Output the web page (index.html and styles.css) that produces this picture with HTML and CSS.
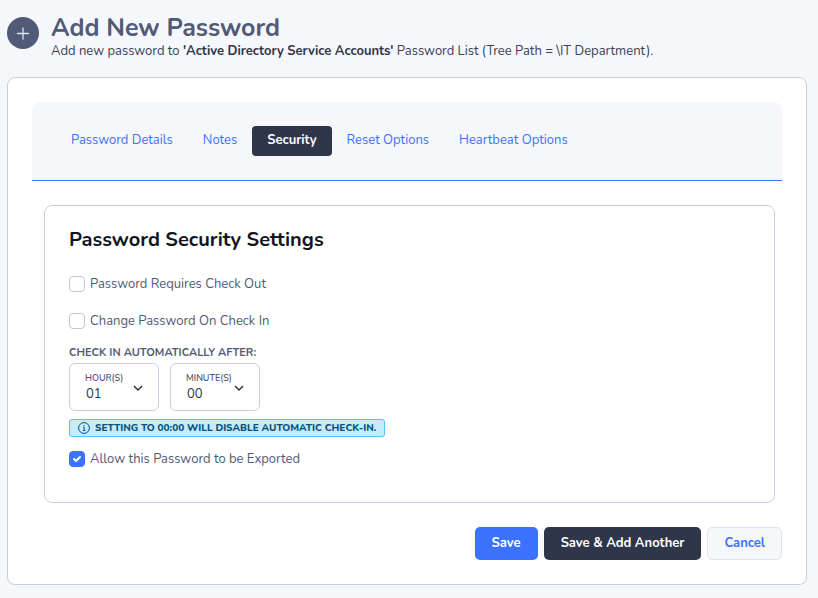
FILE: index.html
```html
<!DOCTYPE html>
<html lang="en">
<head>
  <meta charset="UTF-8">
  <meta name="viewport" content="width=device-width, initial-scale=1.0">
  <title>Add New Password</title>
  <link rel="stylesheet" href="styles.css">
</head>
<body>
  <header class="page-header">
    <svg class="page-icon" viewBox="0 0 32 32" aria-hidden="true">
      <circle cx="16" cy="16" r="16" fill="#515a76"/>
      <path d="M16 11v11M10.500 16.500h11" stroke="#dfe3ee" stroke-width="1.300" stroke-linecap="round"/>
    </svg>
    <div>
      <h1>Add New Password</h1>
      <p>Add new password to <strong>'Active Directory Service Accounts'</strong> Password List (Tree Path = \IT Department).</p>
    </div>
  </header>

  <main class="card">
    <nav class="tabs">
      <a href="#details">Password Details</a>
      <a href="#notes">Notes</a>
      <a href="#security" class="active">Security</a>
      <a href="#reset">Reset Options</a>
      <a href="#heartbeat">Heartbeat Options</a>
    </nav>

    <form id="securityForm">
      <section class="panel">
        <h2>Password Security Settings</h2>

        <div class="check">
          <input type="checkbox" id="requireCheckOut">
          <label for="requireCheckOut">Password Requires Check Out</label>
        </div>
        <div class="check">
          <input type="checkbox" id="changeOnCheckIn">
          <label for="changeOnCheckIn">Change Password On Check In</label>
        </div>

        <h3>CHECK IN AUTOMATICALLY AFTER:</h3>
        <div class="time">
          <div class="select-box">
            <label for="hours">HOUR(S)</label>
            <select id="hours">
              <option>00</option>
              <option selected>01</option>
              <option>02</option>
              <option>03</option>
            </select>
            <svg viewBox="0 0 10 6" aria-hidden="true"><path d="M1 1l4 4 4-4"/></svg>
          </div>
          <div class="select-box">
            <label for="minutes">MINUTE(S)</label>
            <select id="minutes">
              <option selected>00</option>
              <option>15</option>
              <option>30</option>
              <option>45</option>
            </select>
            <svg viewBox="0 0 10 6" aria-hidden="true"><path d="M1 1l4 4 4-4"/></svg>
          </div>
        </div>

        <div class="info">
          <svg viewBox="0 0 12 12" aria-hidden="true">
            <circle cx="6" cy="6" r="5.400"/>
            <path d="M5 5.400h1.200v3M4.900 8.500h2.400M6 3v1"/>
          </svg>
          <span>SETTING TO 00:00 WILL DISABLE AUTOMATIC CHECK-IN.</span>
        </div>

        <div class="check">
          <input type="checkbox" id="allowExport" checked>
          <label for="allowExport">Allow this Password to be Exported</label>
        </div>
      </section>

      <div class="actions">
        <button type="submit" class="save">Save</button>
        <button type="submit" class="save-another">Save &amp; Add Another</button>
        <button type="button" class="cancel">Cancel</button>
      </div>
    </form>
  </main>
</body>
</html>
```

FILE: styles.css
```css
* {
  box-sizing: border-box;
}
body {
  margin: 0;
  padding: 14px 11px 13px 7px;
  background: #f5f7fb;
  color: #3a4158;
  font-family: Nunito, 'Open Sans', sans-serif;
  font-size: 13px;
  line-height: 18px;
}
h1, h2, h3, p {
  margin: 0;
}
.page-header {
  display: flex;
  gap: 12px;
  margin-bottom: 17px;
}
.page-icon {
  width: 32px;
  height: 32px;
  margin-top: 3px;
}
h1 {
  color: #515a76;
  font-size: 25px;
  font-weight: 700;
  line-height: 28px;
}
.page-header strong {
  color: #2f3548;
}
.card {
  padding: 24px;
  background: #fff;
  border: 1px solid #c9cede;
  border-radius: 8px;
}
.tabs {
  display: flex;
  padding: 24px;
  background: #f5f7fb;
  border-bottom: 1px solid #3b73ff;
  border-radius: 8px 8px 0 0;
}
.tabs a {
  padding: 5px 15px 7px;
  border-radius: 4px;
  color: #3b73ff;
  text-decoration: none;
}
.tabs .active {
  background: #30364a;
  color: #fff;
  font-weight: 700;
}
.panel {
  margin: 24px 7px 24px 12px;
  padding: 21px 24px 15px;
  border: 1px solid #c9cede;
  border-radius: 8px;
}
h2 {
  margin-bottom: 22px;
  color: #121521;
  font-size: 20px;
  font-weight: 700;
  line-height: 26px;
}
.check {
  display: flex;
  align-items: center;
  gap: 5px;
  margin-bottom: 19px;
  color: #515a76;
}
.check input {
  appearance: none;
  width: 16px;
  height: 16px;
  margin: 0;
  background: #fff;
  border: 1px solid #c3c9dc;
  border-radius: 4px;
}
.check input:checked {
  background: #3b73ff url("data:image/svg+xml,%3Csvg xmlns='http://www.w3.org/2000/svg' viewBox='0 0 16 16'%3E%3Cpath d='M5 8l2 2 4-4' fill='none' stroke='white' stroke-width='2' stroke-linecap='round' stroke-linejoin='round'/%3E%3C/svg%3E") center / 16px;
  border-color: #3b73ff;
}
h3 {
  margin: -4px 0 2px;
  color: #515a76;
  font-size: 11px;
  font-weight: 700;
  line-height: 16px;
}
.time {
  display: flex;
  gap: 11px;
  margin-bottom: 8px;
}
.select-box {
  position: relative;
  width: 90px;
}
.select-box label {
  position: absolute;
  top: 9px;
  left: 16px;
  color: #515a76;
  font-size: 9px;
  font-weight: 600;
  line-height: 12px;
  pointer-events: none;
}
.select-box select {
  appearance: none;
  width: 100%;
  height: 48px;
  padding: 14px 16px 0;
  background: #fff;
  border: 1px solid #c9cede;
  border-radius: 6px;
  color: #30364a;
  font: inherit;
}
.select-box svg {
  position: absolute;
  top: 22px;
  right: 16px;
  width: 10px;
  height: 6px;
  fill: none;
  stroke: #30364a;
  stroke-width: 1.5;
  pointer-events: none;
}
.info {
  display: flex;
  align-items: center;
  gap: 5px;
  width: fit-content;
  margin-bottom: 13px;
  padding: 0 8px;
  background: #c5ebff;
  border: 1px solid #5cc0f5;
  border-radius: 3px;
  color: #07517d;
  font-size: 10px;
  font-weight: 800;
  line-height: 16px;
}
.info svg {
  width: 12px;
  height: 12px;
  fill: none;
  stroke: currentColor;
}
.actions {
  display: flex;
  justify-content: flex-end;
  gap: 6px;
}
button {
  padding: 7px 16px;
  border: 1px solid transparent;
  border-radius: 5px;
  font: inherit;
  font-weight: 700;
  line-height: 17px;
  cursor: pointer;
}
.save {
  background: #3b73ff;
  color: #fff;
}
.save-another {
  background: #30364a;
  color: #fff;
}
.cancel {
  background: #f5f7fb;
  border-color: #e1e4ee;
  color: #3b73ff;
}
```
